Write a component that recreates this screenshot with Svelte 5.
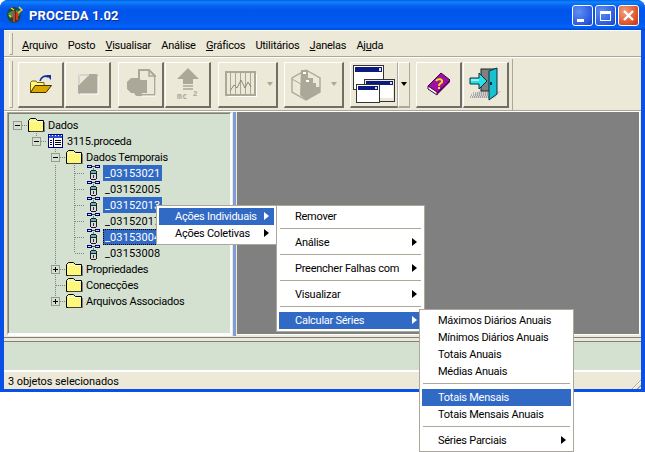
<script>
	const menus = [
		{ label: 'Arquivo', key: 'A', rest: 'rquivo' },
		{ label: 'Posto' },
		{ label: 'Visualisar', key: 'V', rest: 'isualisar' },
		{ label: 'Análise' },
		{ label: 'Gráficos', key: 'G', rest: 'ráficos' },
		{ label: 'Utilitários' },
		{ label: 'Janelas', key: 'J', rest: 'anelas' },
		{ label: 'Ajuda', pre: 'Aj', key: 'u', rest: 'da' }
	];

	// cells: e = empty, x = expander, v = line, t = tee, l = elbow
	const tree = [
		{ cells: ['root-minus'], icon: 'folder', label: 'Dados' },
		{ cells: ['e', 'minus'], icon: 'table', label: '3115.proceda' },
		{ cells: ['e', 'e', 'minus'], icon: 'folder', label: 'Dados Temporais' },
		{ cells: ['e', 'e', 'v', 't'], icon: 'db', label: '_03153021', sel: true },
		{ cells: ['e', 'e', 'v', 't'], icon: 'db', label: '_03152005' },
		{ cells: ['e', 'e', 'v', 't'], icon: 'db', label: '_03152013', sel: true },
		{ cells: ['e', 'e', 'v', 't'], icon: 'db', label: '_03152017' },
		{ cells: ['e', 'e', 'v', 't'], icon: 'db', label: '_03153004', sel: true, focus: true },
		{ cells: ['e', 'e', 'v', 'l'], icon: 'db', label: '_03153008' },
		{ cells: ['e', 'e', 'plus'], icon: 'folder', label: 'Propriedades' },
		{ cells: ['e', 'e', 't'], icon: 'folder', label: 'Conecções' },
		{ cells: ['e', 'e', 'plus-end'], icon: 'folder', label: 'Arquivos Associados' }
	];

	const menu1 = [
		{ label: 'Ações Individuais', sub: true, hi: true },
		{ label: 'Ações Coletivas', sub: true }
	];
	const menu2 = [
		{ label: 'Remover' },
		{ sep: true },
		{ label: 'Análise', sub: true },
		{ sep: true },
		{ label: 'Preencher Falhas com', sub: true },
		{ sep: true },
		{ label: 'Visualizar', sub: true },
		{ sep: true },
		{ label: 'Calcular Séries', sub: true, hi: true }
	];
	const menu3 = [
		{ label: 'Máximos Diários Anuais' },
		{ label: 'Mínimos Diários Anuais' },
		{ label: 'Totais Anuais' },
		{ label: 'Médias Anuais' },
		{ sep: true },
		{ label: 'Totais Mensais', hi: true },
		{ label: 'Totais Mensais Anuais' },
		{ sep: true },
		{ label: 'Séries Parciais', sub: true }
	];
</script>

{#snippet folderIcon()}
	<svg width="17" height="14" viewBox="0 0 17 14">
		<path d="M0.5 13.5V2.5L2.5 0.5H7.5L9.5 2.5H15.5V13.5Z" fill="#fdf77c" stroke="#000" />
		<path d="M1 3.5h14" stroke="#fffde0" />
		<path d="M16.5 4V14H2" fill="none" stroke="#808080" />
	</svg>
{/snippet}

{#snippet tableIcon()}
	<svg width="15" height="14" viewBox="0 0 15 14" shape-rendering="crispEdges">
		<rect x="0.5" y="0.5" width="14" height="13" fill="#fff" stroke="#000080" />
		<rect x="1" y="1" width="13" height="3" fill="#2a52d0" />
		<path d="M1 1h1v1h-1zM4 1h1v1h-1zM7 1h1v1h-1zM10 1h1v1h-1zM13 1h1v1h-1z" fill="#fff" />
		<path d="M5.5 4v9" stroke="#000080" />
		<path d="M2 6h2M2 8h2M2 10h2M7 6h6M7 8h6M7 10h6" stroke="#000" />
	</svg>
{/snippet}

{#snippet dbIcon()}
	<svg width="14" height="16" viewBox="0 0 14 16" shape-rendering="crispEdges">
		<path d="M0.5 0.5h4v2h-4zM8.5 0.5h4v2h-4z" fill="none" stroke="#000080" />
		<path d="M4.5 1.5h4" stroke="#404040" />
		<path d="M6.5 3v2" stroke="#808080" />
		<path d="M4 6h5v1h1v8h-1v1h-5v-1h-1v-8h1z" fill="#202020" transform="translate(0 -1)" />
		<rect x="4" y="6" width="5" height="2" fill="#50b8c8" />
		<rect x="4" y="9" width="5" height="5" fill="#d8d8d8" />
		<rect x="6" y="10" width="1" height="3" fill="#303030" />
	</svg>
{/snippet}

{#snippet arrowDown(dark)}
	<span class="drop" class:dark></span>
{/snippet}

{#snippet menuBox(items, cls)}
	<div class="ctx {cls}">
		{#each items as it}
			{#if it.sep}
				<div class="sep"></div>
			{:else}
				<div class="item" class:hi={it.hi}>
					<span>{it.label}</span>
					{#if it.sub}<i class="caret"></i>{/if}
				</div>
			{/if}
		{/each}
	</div>
{/snippet}

<div class="page">
	<div class="win">
		<div class="title">
			<svg class="logo" width="18" height="18" viewBox="0 0 18 18">
				<ellipse cx="8" cy="9" rx="7" ry="8" fill="#1c4a3a" />
				<path d="M2 7l4-2 3 1-2 5-3 1zM10 4l5 1-2 5-3-1z" fill="#3f8f4f" />
				<path d="M8 16V5M11 14V6" stroke="#e03020" stroke-width="2" />
				<path d="M3 9l2 2M5 2l3 2M13 1l3 3-4 3" stroke="#f0d020" stroke-width="1.5" fill="none" />
			</svg>
			<span class="title-text">PROCEDA 1.02</span>
			<div class="caps">
				<div class="cap"><i class="min"></i></div>
				<div class="cap"><i class="max"></i></div>
				<div class="cap close">
					<svg width="13" height="13" viewBox="0 0 13 13"><path d="M2 2l9 9M11 2l-9 9" stroke="#fff" stroke-width="2.4" /></svg>
				</div>
			</div>
		</div>

		<div class="client">
			<div class="menubar">
				<i class="grip"></i>
				<div class="menu-items">
					{#each menus as m}
						<span>{#if m.key}{m.pre ?? ''}<u>{m.key}</u>{m.rest}{:else}{m.label}{/if}</span>
					{/each}
				</div>
			</div>

			<div class="toolband">
				<i class="grip tall"></i>
				<div class="toolbar">
					<div class="btn">
						<svg width="22" height="20" viewBox="0 0 22 20">
							<path d="M10 7C11 3 15 1 18 3" fill="none" stroke="#1030a0" stroke-width="1.6" />
							<path d="M16 1h5v5z" fill="#1030a0" />
							<path d="M0.5 18.5V8.5L2 7h4l1 1.5h7v3" fill="#fdf77c" stroke="#806000" />
							<path d="M0.5 18.5L5 11.5H21.5L16 18.5Z" fill="#d8a800" stroke="#403000" />
						</svg>
					</div>
					<div class="btn">
						<svg width="22" height="22" viewBox="0 0 22 22">
							<rect x="1" y="1" width="20" height="20" rx="2" fill="#aca899" />
							<path d="M2 12V2h10" fill="none" stroke="#fff" />
							<path d="M3 3h8l-8 8z" fill="#ece9d8" />
							<path d="M21 3v18H3" fill="none" stroke="#fff" />
						</svg>
					</div>
					<div class="space"></div>
					<div class="btn">
						<svg width="30" height="30" viewBox="0 0 30 30">
							<path d="M13 1h10l6 6v19H13z" fill="#ece9d8" stroke="#aca899" stroke-width="2" />
							<path d="M23 1v6h6" fill="none" stroke="#aca899" stroke-width="1.5" />
							<path d="M5 9h7l3 2h6v13h-5l-1 3h-5l-2-3H5L1 20v-7z" fill="#aca899" />
							<path d="M30 8v19H16" fill="none" stroke="#fff" />
						</svg>
					</div>
					<div class="btn">
						<svg width="24" height="32" viewBox="0 0 24 32">
							<path d="M12 0L23 11H17V16H7V11H1Z" fill="#aca899" />
							<path d="M7 18h10M7 21h10" stroke="#aca899" stroke-width="1.5" />
							<text x="1" y="31" class="mc">mc</text>
							<text x="17" y="28" class="mc2">2</text>
						</svg>
					</div>
					<div class="space"></div>
					<div class="btn wide">
						<svg width="32" height="26" viewBox="0 0 32 26" shape-rendering="crispEdges">
							<rect x="1" y="1" width="29" height="23" fill="#ece9d8" stroke="#aca899" stroke-width="2" />
							<path d="M5 2v21M10 2v21M15 2v21M20 2v21M25 2v21" stroke="#aca899" />
							<path d="M31 3v22H3" fill="none" stroke="#fff" />
							<path d="M5 20l4-6 3 3 4-8 4 8 3-6 3 5" fill="none" stroke="#8c8878" shape-rendering="auto" />
						</svg>
						{@render arrowDown(false)}
					</div>
					<div class="space short"></div>
					<div class="btn wide">
						<svg width="30" height="35" viewBox="0 0 30 35">
							<path d="M15 3L29 11V25L15 33L1 25V11Z" fill="#ece9d8" stroke="#aca899" stroke-width="1.4" />
							<path d="M10 3h7v8h5v5h3v4h4v5L15 33L9 28Z" fill="#aca899" />
							<path d="M12 5h3v2h-3zM15 13h3v2h-3z" fill="#fff" />
							<path d="M1 12l14 8" stroke="#aca899" />
						</svg>
						{@render arrowDown(false)}
					</div>
					<div class="space short"></div>
					<div class="btn win-btn">
						<svg width="42" height="38" viewBox="0 0 42 38" shape-rendering="crispEdges">
							<rect x="0.5" y="0.5" width="30" height="24" fill="#fff" stroke="#333" />
							<rect x="2" y="2" width="27" height="5" fill="#0a1a80" />
							<rect x="26" y="3" width="2" height="3" fill="#ddd" />
							<rect x="11.5" y="14.5" width="30" height="22" fill="#ece9d8" stroke="#333" />
							<rect x="13" y="16" width="27" height="17" fill="#fff" />
							<rect x="13" y="16" width="27" height="4" fill="#0a1a80" />
							<rect x="37" y="17" width="2" height="2" fill="#ddd" />
							<rect x="3.5" y="19.5" width="23" height="18" fill="#fff" stroke="#333" />
							<rect x="5" y="21" width="20" height="4" fill="#0a1a80" />
							<rect x="22" y="22" width="2" height="2" fill="#ddd" />
						</svg>
					</div>
					<div class="btn split">{@render arrowDown(true)}</div>
					<div class="space short"></div>
					<div class="btn">
						<svg width="24" height="24" viewBox="0 0 24 24">
							<path d="M1 14L14 1L23 8L10 22Z" fill="#a010a0" stroke="#400040" />
							<path d="M1 14L10 20V23L1 17Z" fill="#fff" stroke="#400040" />
							<path d="M10 20L23 8V10L10 23Z" fill="#600060" />
							<path d="M9 9C11 6 16 7 15 10C14 12 12 11 12 14" fill="none" stroke="#f0e020" stroke-width="2" />
							<rect x="11" y="15" width="2" height="2" fill="#f0e020" />
						</svg>
					</div>
					<div class="btn">
						<svg width="33" height="34" viewBox="0 0 33 34">
							<path d="M10 24L2 31H26L32 24Z" fill="#ccc" opacity="0.9" />
							<path d="M2 28h24M4 26h24M1 30h24" stroke="#777" stroke-dasharray="1 1" />
							<rect x="12" y="2" width="14" height="22" fill="#808080" stroke="#222" />
							<path d="M20 4L28 1V27L20 33Z" fill="#18c0d0" stroke="#063040" />
							<rect x="21" y="15" width="2" height="3" fill="#063040" />
							<path d="M1 11h9V6l8 8-8 8v-5H1Z" fill="#28e0e8" stroke="#063040" />
							<path d="M2 13h8" stroke="#fff" />
						</svg>
					</div>
				</div>
			</div>

			<div class="main">
				<div class="tree-wrap">
					<div class="tree">
						{#each tree as row}
							<div class="row">
								{#each row.cells as c}
									<div class="cell {c}">
										{#if c.includes('minus') || c.includes('plus')}
											<span class="exp" class:plus={c.includes('plus')}></span>
										{/if}
									</div>
								{/each}
								<div class="node-icon">
									{#if row.icon === 'folder'}{@render folderIcon()}{/if}
									{#if row.icon === 'table'}{@render tableIcon()}{/if}
									{#if row.icon === 'db'}{@render dbIcon()}{/if}
								</div>
								<span class="label" class:num={row.icon === 'db'} class:sel={row.sel} class:focus={row.focus}>{row.label}</span>
							</div>
						{/each}
					</div>
				</div>
				<div class="splitter"></div>
				<div class="canvas"></div>
			</div>

			<div class="lower"><div class="lower-in"></div></div>

			<div class="status">
				<span>3 objetos selecionados</span>
				<i class="resize"></i>
			</div>
		</div>

		{@render menuBox(menu1, 'm1')}
		{@render menuBox(menu2, 'm2')}
		{@render menuBox(menu3, 'm3')}
	</div>
</div>

<style>
	:global(body) {
		background: #fff;
	}

	.page {
		height: 452px;
		width: 645px;
	}

	.win {
		position: relative;
		width: 645px;
		height: 392px;
		box-sizing: border-box;
		background: #0a50e6;
		border-radius: 8px 8px 0 0;
		padding: 0 4px 3px;
		font-family: Roboto, sans-serif;
		font-size: 11px;
		color: #000;
		display: flex;
		flex-direction: column;
	}

	.title {
		height: 30px;
		margin: 0 -4px;
		padding: 0 6px 0 6px;
		flex: none;
		display: flex;
		align-items: center;
		border-radius: 8px 8px 0 0;
		background: linear-gradient(to bottom, #0a5be0 0, #0a86ff 2px, #0a66f2 5px, #0055ea 10px, #0058ee 22px, #0263f8 27px, #0046d8 30px);
	}

	.logo {
		flex: none;
	}

	.title-text {
		margin-left: 5px;
		color: #fff;
		font-family: Roboto, sans-serif;
		font-weight: bold;
		font-size: 13px;
		letter-spacing: 0.15px;
		text-shadow: 1px 1px 0 #0f2f90;
	}

	.caps {
		margin-left: auto;
		margin-top: 1px;
		display: flex;
		gap: 2px;
	}

	.cap {
		width: 21px;
		height: 21px;
		box-sizing: border-box;
		border: 1px solid #fff;
		border-radius: 3px;
		background: radial-gradient(circle at 30% 30%, #5f90f0, #2a5ae0 70%, #1a40c0);
		display: flex;
		align-items: center;
		justify-content: center;
	}

	.cap.close {
		background: radial-gradient(circle at 30% 30%, #f0a080, #e05a30 60%, #c03010);
	}

	.min {
		width: 7px;
		height: 3px;
		background: #fff;
		margin-top: 9px;
		margin-right: 4px;
	}

	.max {
		width: 11px;
		height: 10px;
		box-sizing: border-box;
		border: 1px solid #fff;
		border-top-width: 3px;
	}

	.client {
		flex: 1;
		background: #ece9d8;
		display: flex;
		flex-direction: column;
		min-height: 0;
	}

	.menubar {
		height: 27px;
		box-sizing: border-box;
		flex: none;
		display: flex;
		align-items: center;
		border-top: 1px solid #fff;
		border-bottom: 1px solid #aca899;
		box-shadow: 0 1px 0 #fff;
	}

	.grip {
		flex: none;
		width: 2px;
		height: 21px;
		margin-left: 5px;
		border-left: 1px solid #fff;
		border-right: 1px solid #aca899;
		border-bottom: 1px solid #aca899;
	}

	.grip.tall {
		height: 46px;
	}

	.menu-items {
		display: flex;
		gap: 10.25px;
		margin-left: 9px;
		padding-top: 4px;
		letter-spacing: -0.25px;
	}

	.toolband {
		height: 53px;
		flex: none;
		margin-top: 1px;
		padding-top: 1px;
		box-sizing: border-box;
		display: flex;
		align-items: center;
		border-bottom: 1px solid #aca899;
		box-shadow: 0 1px 0 #fff;
	}

	.toolbar {
		display: flex;
		margin-left: 5px;
		gap: 1px;
		padding-right: 3px;
		height: 51px;
		align-items: center;
		border-right: 1px solid #aca899;
	}

	.btn {
		width: 46px;
		height: 46px;
		box-sizing: border-box;
		flex: none;
		display: flex;
		align-items: center;
		justify-content: center;
		border-top: 1px solid #fff;
		border-left: 1px solid #fff;
		border-right: 2px solid #716f64;
		border-bottom: 2px solid #716f64;
	}

	.btn.wide {
		width: 60px;
		justify-content: flex-start;
		padding-left: 6px;
		gap: 10px;
	}

	.btn.win-btn {
		width: 48px;
		margin-right: -1px;
		border-right: 1px solid #aca899;
	}

	.btn.split {
		width: 12px;
		border-bottom: 2px solid #aca899;
		border-right: 1px solid #aca899;
	}

	.space {
		width: 5px;
		flex: none;
	}

	.space.short {
		width: 4px;
	}

	.drop {
		width: 0;
		height: 0;
		border: 3.5px solid transparent;
		border-top: 4px solid #aca899;
		border-bottom: 0;
		flex: none;
	}

	.drop.dark {
		border-top-color: #000;
	}

	.mc {
		font: bold 8px "DejaVu Sans Mono", monospace;
		fill: #aca899;
		letter-spacing: 0.5px;
	}

	.mc2 {
		font: bold 8px "Liberation Sans", sans-serif;
		fill: #aca899;
	}

	.main {
		flex: none;
		height: 225px;
		margin-top: 1px;
		display: flex;
		padding: 0 1px 0 3px;
		border-bottom: 1px solid #808080;
	}

	.tree-wrap {
		width: 225px;
		height: 224px;
		box-sizing: border-box;
		border: 1px solid #aca899;
		border-right: 2px solid #fff;
		border-bottom: 3px solid #fff;
		background: #d4e0d0;
		box-shadow: inset 1px 1px 0 #808070;
		flex: none;
	}

	.tree {
		padding: 4px 0 0 0;
	}

	.row {
		display: flex;
		height: 16px;
		align-items: center;
		letter-spacing: -0.25px;
	}

	.cell {
		width: 19px;
		height: 16px;
		flex: none;
		display: flex;
		align-items: center;
		justify-content: center;
		background-repeat: no-repeat;
	}

	.v,
	.t,
	.l,
	.minus,
	.plus,
	.plus-end,
	.root-minus {
		--vline: repeating-linear-gradient(to bottom, #808080 0 1px, transparent 1px 2px);
		--hline: repeating-linear-gradient(to right, #808080 0 1px, transparent 1px 2px);
	}

	.v {
		background-image: var(--vline);
		background-size: 1px 16px;
		background-position: 9px 0;
	}

	.t {
		background-image: var(--vline), var(--hline);
		background-size: 1px 16px, 9px 1px;
		background-position: 9px 0, 10px 8px;
	}

	.l,
	.plus-end {
		background-image: var(--vline), var(--hline);
		background-size: 1px 8px, 9px 1px;
		background-position: 9px 0, 10px 8px;
	}

	.minus {
		background-image: var(--vline), var(--hline);
		background-size: 1px 4px, 9px 1px;
		background-position: 9px 0, 10px 8px;
	}

	.plus {
		background-image: var(--vline), var(--hline);
		background-size: 1px 16px, 9px 1px;
		background-position: 9px 0, 10px 8px;
	}

	.root-minus {
		background-image: var(--hline);
		background-size: 9px 1px;
		background-position: 10px 8px;
	}

	.exp {
		width: 9px;
		height: 9px;
		box-sizing: border-box;
		border: 1px solid #989890;
		background:
			linear-gradient(#000, #000) center / 5px 1px no-repeat,
			#d4e0d0;
	}

	.exp.plus {
		background:
			linear-gradient(#000, #000) center / 5px 1px no-repeat,
			linear-gradient(#000, #000) center / 1px 5px no-repeat,
			#d4e0d0;
	}

	.node-icon {
		width: 19px;
		height: 16px;
		flex: none;
		display: flex;
		align-items: center;
		justify-content: center;
	}

	.label {
		padding: 0 2px;
		height: 16px;
		line-height: 17px;
		white-space: nowrap;
		box-sizing: border-box;
	}

	.label.num {
		letter-spacing: 0.1px;
	}

	.label.sel {
		background: #316ac5;
		color: #fff;
	}

	.label.focus {
		outline: 1px dotted #000;
		outline-offset: -1px;
	}

	.splitter {
		width: 3px;
		margin-left: 1px;
		background: #7f9ddc;
		flex: none;
		height: 224px;
	}

	.canvas {
		flex: 1;
		height: 222px;
		margin-left: 1px;
		background: #808080;
		border-bottom: 1px solid #fff;
		border-right: 1px solid #fff;
	}

	.lower {
		flex: none;
		height: 34px;
		padding-top: 3px;
		box-sizing: border-box;
	}

	.lower-in {
		height: 28px;
		background: #d4e0d0;
		border-top: 1px solid #808080;
		box-shadow: 0 2px 0 #fff;
	}

	.status {
		flex: 1;
		display: flex;
		align-items: center;
		padding: 1px 0 0 4px;
		letter-spacing: -0.1px;
		position: relative;
	}

	.resize {
		position: absolute;
		right: 0;
		bottom: 0;
		width: 12px;
		height: 12px;
		background: repeating-linear-gradient(135deg, transparent 0 2px, #aca899 2px 3px, #fff 3px 4px);
		clip-path: polygon(100% 0, 100% 100%, 0 100%);
	}

	.ctx {
		position: absolute;
		box-sizing: border-box;
		background: #fff;
		border: 1px solid #aca899;
		padding: 2px;
	}

	.m1 {
		left: 156px;
		top: 205px;
		width: 121px;
	}

	.m2 {
		left: 276px;
		top: 205px;
		width: 149px;
	}

	.m3 {
		left: 419px;
		top: 309px;
		width: 155px;
		height: 143px;
	}

	.item {
		height: 17px;
		box-sizing: border-box;
		display: flex;
		align-items: center;
		justify-content: space-between;
		padding: 0 5px 1px 16px;
		letter-spacing: -0.25px;
		white-space: nowrap;
	}

	.item.hi {
		background: #316ac5;
		color: #fff;
	}

	.caret {
		width: 0;
		height: 0;
		border: 4px solid transparent;
		border-left: 5px solid #000;
		border-right: 0;
	}

	.item.hi .caret {
		border-left-color: #fff;
	}

	.sep {
		height: 9px;
		background: linear-gradient(#aca899, #aca899) 50% 3px / calc(100% - 2px) 1px no-repeat;
	}
</style>
